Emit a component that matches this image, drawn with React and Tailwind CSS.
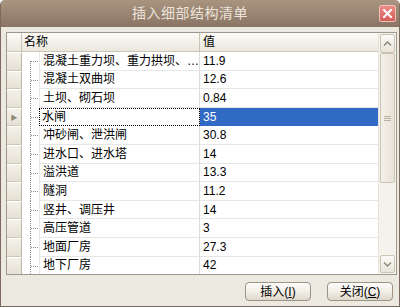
import React from "react";

const rows = [
  ["混凝土重力坝、重力拱坝、…", "11.9"],
  ["混凝土双曲坝", "12.6"],
  ["土坝、砌石坝", "0.84"],
  ["水闸", "35"],
  ["冲砂闸、泄洪闸", "30.8"],
  ["进水口、进水塔", "14"],
  ["溢洪道", "13.3"],
  ["隧洞", "11.2"],
  ["竖井、调压井", "14"],
  ["高压管道", "3"],
  ["地面厂房", "27.3"],
  ["地下厂房", "42"],
];

const SELECTED = 3;

const TreeLines = ({ first }) => (
  <svg width="17" height="19" className="block" shapeRendering="crispEdges">
    <line x1="8.5" y1={first ? 9 : 0} x2="8.5" y2="19" stroke="#8c8c8c" strokeDasharray="1 1" />
    <line x1="9" y1="9.5" x2="17" y2="9.5" stroke="#8c8c8c" strokeDasharray="1 1" />
  </svg>
);

const Chevron = ({ down }) => (
  <svg width="9" height="6" viewBox="0 0 9 6">
    <path
      d={down ? "M1 1.5 L4.5 5 L8 1.5" : "M1 4.5 L4.5 1 L8 4.5"}
      fill="none"
      stroke="#8a8478"
      strokeWidth="1.3"
    />
  </svg>
);

const Row = ({ name, value, index }) => {
  const sel = index === SELECTED;
  return (
    <div className="flex h-[18.6px] shrink-0">
      {/* row header */}
      <div className="w-[15px] bg-gradient-to-b from-[#f4f1ea] to-[#e6e1d5] border-t border-t-white border-b border-b-[#cfc9ba] border-r border-r-[#bdb6a5] flex items-center justify-center">
        {sel && <span className="text-[7px] text-[#8d8878] leading-none">▶</span>}
      </div>
      <div className="w-[17px] bg-white overflow-hidden">
        <TreeLines first={index === 0} />
      </div>
      <div
        className={
          "w-[161px] bg-white border-r border-r-[#dcdcdc] flex items-center pl-[3px] " +
          (sel
            ? "outline-1 outline-dotted outline-black -outline-offset-1"
            : "border-l border-l-[#e8e8e8] border-b border-b-[#e6e6e6]")
        }
      >
        <span className="whitespace-nowrap">{name}</span>
      </div>
      <div
        className={
          "flex-1 flex items-center pl-[3px] border-b " +
          (sel ? "bg-[#316ac5] text-white border-b-[#316ac5]" : "bg-white border-b-[#e6e6e6]")
        }
      >
        {value}
      </div>
    </div>
  );
};

const Button = ({ label, hot }) => (
  <button className="w-[66px] h-[19px] rounded-[4px] border border-[#9c9484] bg-gradient-to-b from-[#fdfcfa] via-[#f2efe8] to-[#ddd8cb] text-[12px] leading-none flex items-center justify-center text-black">
    {label}(<span className="underline">{hot}</span>)
  </button>
);

export default function App() {
  return (
    <div
      className="w-[400px] h-[307px] flex flex-col bg-[#ece9e1] border border-[#7c6a5c] border-t-0 rounded-t-[5px] overflow-hidden text-[12px] text-black"
      style={{ fontFamily: '"Liberation Sans", "Noto Sans CJK SC", sans-serif' }}
    >
      {/* title bar */}
      <div className="h-[27px] shrink-0 bg-gradient-to-b from-[#a8947f] via-[#9a8573] to-[#8a7565] relative flex items-center justify-center">
        <span className="text-[14px] text-[#ece3da] tracking-[0.5px] -ml-[20px]">插入细部结构清单</span>
        <div className="absolute right-[3px] top-[5px] w-[17px] h-[17px] rounded-[2px] border border-[#f0c0b8] bg-gradient-to-b from-[#ec8a86] to-[#d35c58] flex items-center justify-center">
          <svg width="11" height="11" viewBox="0 0 11 11">
            <path d="M2 2 L9 9 M9 2 L2 9" stroke="white" strokeWidth="2" strokeLinecap="square" />
          </svg>
        </div>
      </div>

      {/* grid */}
      <div className="mt-[5px] ml-[5px] mr-[2px] h-[243px] border border-[#9f998c] flex bg-white">
        <div className="flex-1 flex flex-col overflow-hidden">
          <div className="flex h-[19px] shrink-0 bg-gradient-to-b from-[#fbfaf7] to-[#ebe7dd] border-b border-b-[#cbc5b6]">
            <div className="w-[15px] border-r border-r-[#cbc5b6]" />
            <div className="w-[178px] border-r border-r-[#cbc5b6] flex items-center pl-[2px]">名称</div>
            <div className="flex-1 flex items-center pl-[3px]">值</div>
          </div>
          <div className="flex-1 flex flex-col overflow-hidden">
            {rows.map(([n, v], i) => (
              <Row key={i} name={n} value={v} index={i} />
            ))}
          </div>
        </div>

        {/* scrollbar */}
        <div className="w-[18px] bg-[#f4f2ec] border-l border-l-[#e6e2d8] flex flex-col">
          <div className="h-[19px] shrink-0 mx-[1px] mt-[1px] rounded-[2px] border border-[#cbc4b4] bg-gradient-to-b from-[#fbfaf7] to-[#e9e5da] flex items-center justify-center">
            <Chevron />
          </div>
          <div className="h-[130px] shrink-0 mx-[1px] rounded-[2px] border border-[#cbc4b4] bg-gradient-to-r from-[#f3f0e9] to-[#e8e3d7] flex items-center justify-center">
            <div className="flex flex-col gap-[1px]">
              <div className="w-[7px] h-[1px] bg-[#b9b2a2]" />
              <div className="w-[7px] h-[1px] bg-[#b9b2a2]" />
              <div className="w-[7px] h-[1px] bg-[#b9b2a2]" />
            </div>
          </div>
          <div className="flex-1" />
          <div className="h-[18px] shrink-0 mx-[1px] mb-[1px] rounded-[2px] border border-[#cbc4b4] bg-gradient-to-b from-[#fbfaf7] to-[#e9e5da] flex items-center justify-center">
            <Chevron down />
          </div>
        </div>
      </div>

      {/* buttons */}
      <div className="flex justify-end gap-[16px] pr-[6px] mt-[7px]">
        <Button label="插入" hot="I" />
        <Button label="关闭" hot="C" />
      </div>
    </div>
  );
}
